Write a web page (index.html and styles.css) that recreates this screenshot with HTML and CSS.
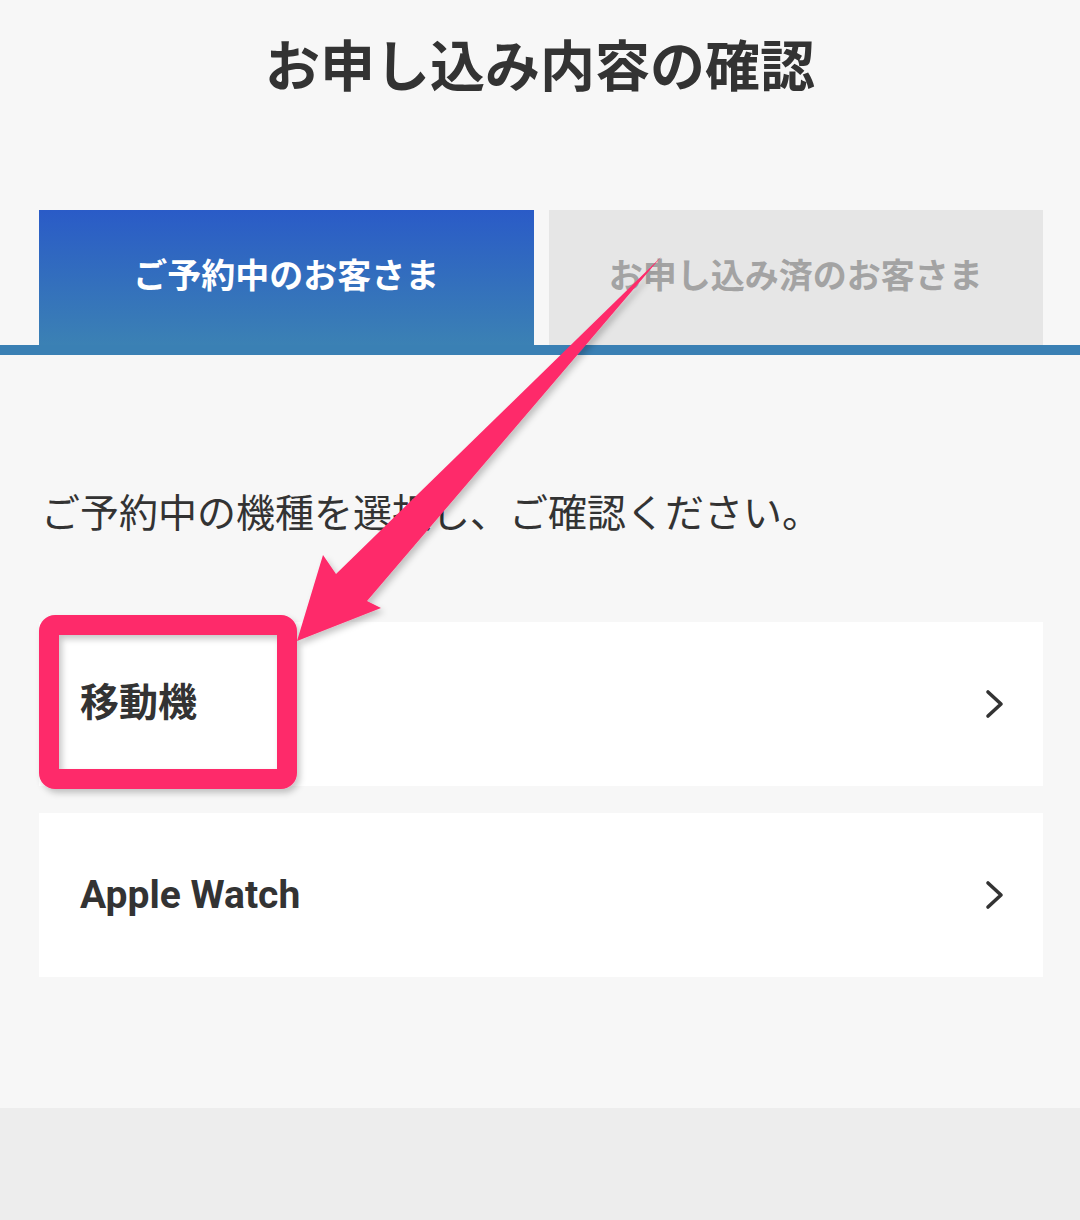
FILE: index.html
```html
<!DOCTYPE html>
<html lang="ja">

<head>
    <meta charset="UTF-8">
    <meta name="viewport" content="width=device-width, initial-scale=1.0">
    <title>お申し込み内容の確認</title>
    <link rel="stylesheet" href="styles.css">
</head>

<body>
    <div class="page">
        <h1 class="title">お申し込み内容の確認</h1>

        <div class="tabs">
            <div class="tab active">ご予約中のお客さま</div>
            <div class="tab">お申し込み済のお客さま</div>
        </div>

        <p class="lead">ご予約中の機種を選択し、ご確認ください。</p>

        <ul class="list">
            <li class="item">
                <span class="name jp">移動機</span>
                <svg class="chev" width="20" height="30" viewBox="0 0 20 30"><path d="M3 3 L16 15 L3 27" fill="none" stroke="#333" stroke-width="3.6" stroke-linecap="round" stroke-linejoin="round"/></svg>
            </li>
            <li class="item">
                <span class="name">Apple Watch</span>
                <svg class="chev" width="20" height="30" viewBox="0 0 20 30"><path d="M3 3 L16 15 L3 27" fill="none" stroke="#333" stroke-width="3.6" stroke-linecap="round" stroke-linejoin="round"/></svg>
            </li>
        </ul>

        <div class="footer"></div>

        <!-- 注釈（矢印と枠） -->
        <svg class="note" width="1080" height="1220" viewBox="0 0 1080 1220">
            <defs>
                <filter id="sh" x="-20%" y="-20%" width="140%" height="140%">
                    <feDropShadow dx="3" dy="4" stdDeviation="3" flood-color="#000" flood-opacity="0.22"/>
                </filter>
            </defs>
            <rect x="49" y="625" width="238" height="154" rx="6" fill="none" stroke="#fe2a6a" stroke-width="20" filter="url(#sh)"/>
            <path d="M661 257 L367 601 L381 608 L297 641 L323 555 L336 574 Z" fill="#fe2a6a" filter="url(#sh)"/>
        </svg>
    </div>
</body>

</html>
```

FILE: styles.css
```css
* {
    padding: 0;
    margin: 0;
    box-sizing: border-box;
}

li {
    list-style: none;
}

body {
    background-color: #f7f7f7;
    font-family: Roboto, "Noto Sans CJK JP", sans-serif;
    color: #333;
}

.page {
    position: relative;
    width: 1080px;
    height: 1220px;
    display: flex;
    flex-direction: column;
}

.title {
    padding-top: 40px;
    font-size: 55px;
    line-height: 55px;
    font-weight: bold;
    text-align: center;
    color: #333;
}

.tabs {
    margin-top: 115px;
    padding: 0 37px 0 39px;
    display: flex;
    gap: 15px;
    border-bottom: 10px solid #3a80b4;
}

.tab {
    flex: 1;
    height: 135px;
    display: flex;
    align-items: center;
    justify-content: center;
    font-size: 34px;
    font-weight: bold;
    color: #a3a3a3;
    background-color: #e6e6e6;
    padding-bottom: 8px;
}

.tab.active {
    color: #fff;
    background: linear-gradient(#2a5bc7, #3b81b4);
}

.lead {
    margin-top: 140px;
    padding-left: 41px;
    font-size: 39px;
    line-height: 39px;
    color: #333;
}

.list {
    margin-top: 88px;
    padding: 0 37px 0 39px;
    display: flex;
    flex-direction: column;
    gap: 27px;
}

.item {
    height: 164px;
    background-color: #fff;
    display: flex;
    align-items: center;
    justify-content: space-between;
    padding: 0 38px 0 41px;
}

.name {
    font-size: 39px;
    font-weight: bold;
    color: #333;
}

.name.jp {
    padding-bottom: 10px;
}

.footer {
    margin-top: auto;
    height: 112px;
    background-color: #ededed;
}

.note {
    position: absolute;
    left: 0;
    top: 0;
    pointer-events: none;
}
```
